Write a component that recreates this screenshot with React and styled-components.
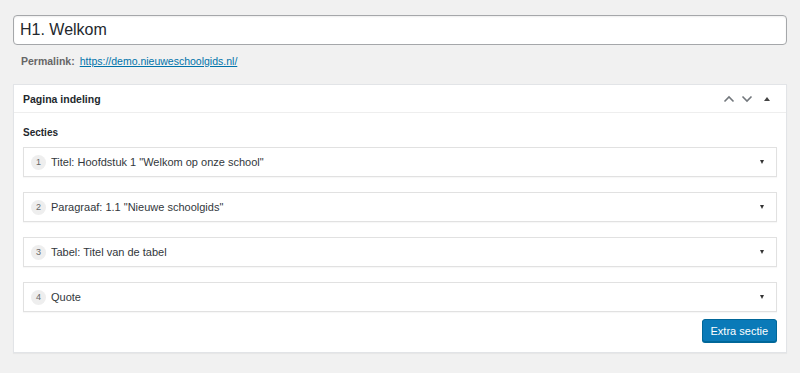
import React from 'react';
import styled, { createGlobalStyle } from 'styled-components';

const sections = [
  { type: 'Titel', label: 'Hoofdstuk 1 "Welkom op onze school"' },
  { type: 'Paragraaf', label: '1.1 "Nieuwe schoolgids"' },
  { type: 'Tabel', label: 'Titel van de tabel' },
  { type: 'Quote', label: null },
];

export default function App() {
  return (
    <>
      <GlobalStyle />
      <Page>
        <TitleInput defaultValue="H1. Welkom" />
        <Permalink>
          <strong>Permalink:</strong>
          <a href="#">https://demo.nieuweschoolgids.nl/</a>
        </Permalink>

        <Postbox>
          <PostboxHeader>
            <PostboxTitle>Pagina indeling</PostboxTitle>
            <HeaderActions>
              <IconButton aria-label="Omhoog">
                <svg width="12" height="8" viewBox="0 0 12 8">
                  <path d="M1.5 6.5 L6 2 L10.5 6.5" fill="none" stroke="#72777c" strokeWidth="1.6" />
                </svg>
              </IconButton>
              <IconButton aria-label="Omlaag">
                <svg width="12" height="8" viewBox="0 0 12 8">
                  <path d="M1.5 1.5 L6 6 L10.5 1.5" fill="none" stroke="#72777c" strokeWidth="1.6" />
                </svg>
              </IconButton>
              <IconButton aria-label="Inklappen" $narrow>
                <svg width="6" height="4" viewBox="0 0 6 4">
                  <path d="M0 4 L3 0 L6 4 Z" fill="#444" />
                </svg>
              </IconButton>
            </HeaderActions>
          </PostboxHeader>

          <PostboxBody>
            <FieldLabel>Secties</FieldLabel>
            <SectionList>
              {sections.map((s, i) => (
                <SectionRow key={i}>
                  <Badge>{i + 1}</Badge>
                  <RowText>
                    {s.label ? `${s.type}: ${s.label}` : s.type}
                  </RowText>
                  <Caret />
                </SectionRow>
              ))}
            </SectionList>
            <Footer>
              <PrimaryButton>Extra sectie</PrimaryButton>
            </Footer>
          </PostboxBody>
        </Postbox>
      </Page>
    </>
  );
}

const GlobalStyle = createGlobalStyle`
  html, body {
    margin: 0;
    background: #f1f1f1;
    font-family: "Liberation Sans", Arial, sans-serif;
    color: #23282d;
  }
`;

const Page = styled.div`
  display: flex;
  flex-direction: column;
  padding: 15px 13px 20px;
`;

const TitleInput = styled.input`
  box-sizing: border-box;
  height: 30px;
  padding: 0 6px;
  border: 1px solid #a5a7aa;
  border-radius: 4px;
  background: #fff;
  box-shadow: inset 0 1px 2px rgba(0, 0, 0, 0.07);
  font-family: "Liberation Sans", Arial, sans-serif;
  font-size: 16px;
  color: #23282d;
  outline: none;
`;

const Permalink = styled.div`
  display: flex;
  gap: 5px;
  margin: 9px 0 0 8px;
  font-size: 10.5px;
  line-height: 14px;
  color: #666;

  strong {
    font-weight: 700;
  }

  a {
    color: #0073aa;
    text-decoration: underline;
  }
`;

const Postbox = styled.div`
  margin-top: 16px;
  background: #fff;
  border: 1px solid #e2e4e7;
  box-shadow: 0 1px 1px rgba(0, 0, 0, 0.04);
`;

const PostboxHeader = styled.div`
  display: flex;
  align-items: center;
  justify-content: space-between;
  height: 27px;
  padding: 0 8px 0 9px;
  border-bottom: 1px solid #eee;
`;

const PostboxTitle = styled.h2`
  margin: 0;
  font-size: 10.5px;
  font-weight: 700;
  color: #23282d;
`;

const HeaderActions = styled.div`
  display: flex;
  align-items: center;
`;

const IconButton = styled.button`
  display: flex;
  align-items: center;
  justify-content: center;
  width: ${p => (p.$narrow ? '22px' : '18px')};
  height: 20px;
  padding: 0;
  border: 0;
  background: none;
`;

const PostboxBody = styled.div`
  display: flex;
  flex-direction: column;
  padding: 13px 9px 10px;
`;

const FieldLabel = styled.div`
  font-size: 10px;
  font-weight: 700;
  line-height: 14px;
  color: #23282d;
  margin-bottom: 7px;
`;

const SectionList = styled.div`
  display: flex;
  flex-direction: column;
  gap: 15px;
`;

const SectionRow = styled.div`
  display: flex;
  align-items: center;
  height: 30px;
  box-sizing: border-box;
  padding: 0 12px 0 7px;
  border: 1px solid #e1e1e1;
  background: #fff;
  box-shadow: 0 1px 1px rgba(0, 0, 0, 0.03);
`;

const Badge = styled.span`
  display: flex;
  align-items: center;
  justify-content: center;
  width: 15px;
  height: 15px;
  border-radius: 50%;
  background: #eeeeee;
  font-size: 9px;
  color: #666;
  margin-right: 5px;
`;

const RowText = styled.span`
  flex: 1;
  font-size: 11px;
  color: #32373c;
`;

const Caret = styled.span`
  width: 0;
  height: 0;
  border-left: 2.5px solid transparent;
  border-right: 2.5px solid transparent;
  border-top: 4px solid #333;
`;

const Footer = styled.div`
  display: flex;
  justify-content: flex-end;
  margin-top: 7px;
`;

const PrimaryButton = styled.button`
  height: 23px;
  padding: 0 8px;
  border: 1px solid #006799;
  border-radius: 3px;
  background: #0a7ab8;
  box-shadow: 0 1px 0 #006799;
  color: #fff;
  font-family: "Liberation Sans", Arial, sans-serif;
  font-size: 11px;
  font-weight: 400;
`;
